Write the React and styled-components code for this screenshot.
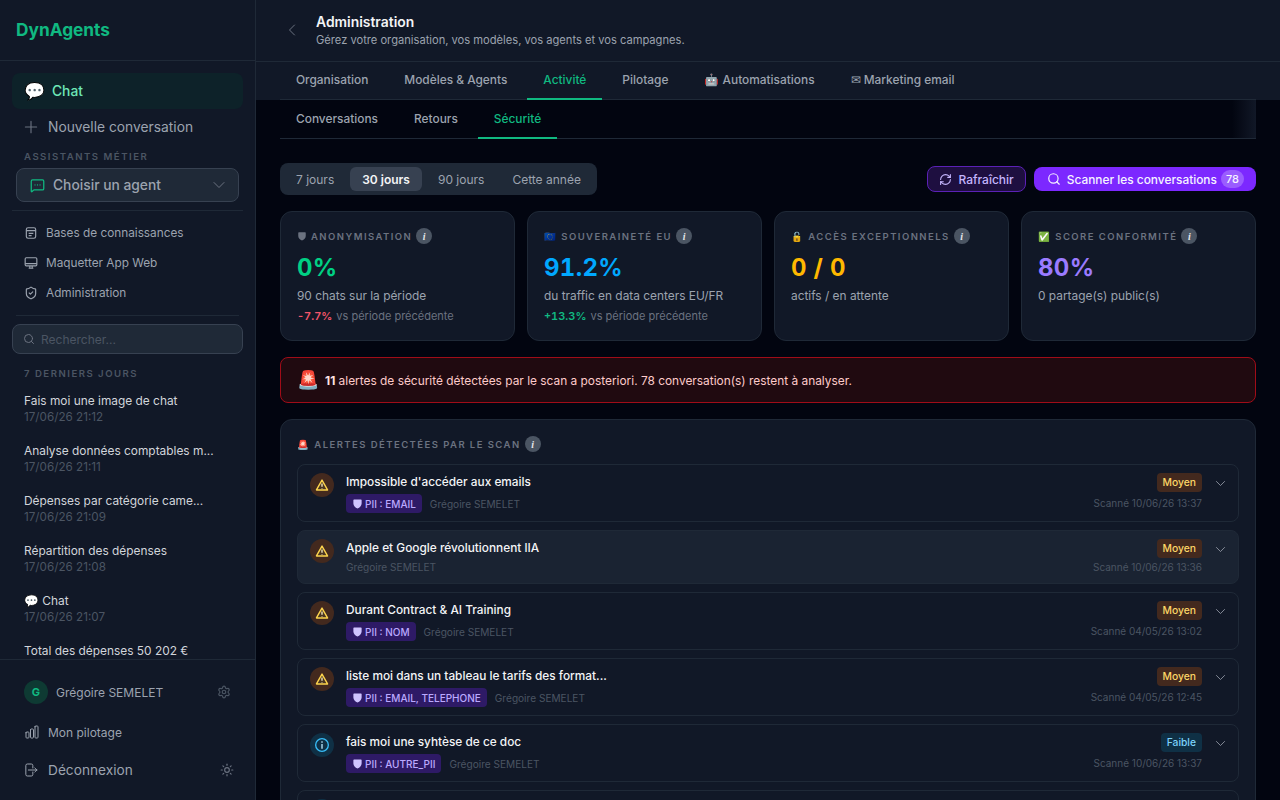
import React from 'react';
import styled, { createGlobalStyle } from 'styled-components';
import { MessageSquareMore, Search, Settings, ShieldCheck, Sun, RefreshCw } from 'lucide-react';

const Global = createGlobalStyle`
  html, body { margin: 0; height: 100%; background: #020510; overflow: hidden; }
  #root { height: 800px; }
  * { box-sizing: border-box; }
  body { font-family: Inter, "Noto Sans", sans-serif; }
`;
const Shell = styled.div`display: flex; width: 1280px; height: 800px; overflow: hidden;`;
const Sidebar = styled.aside`width: 256px; flex: none; height: 800px; background: #111827; border-right: 1px solid #1f2937; display: flex; flex-direction: column;`;
const Logo = styled.div`height: 61px; flex: none; padding: 0 16px 2px; display: flex; align-items: center; border-bottom: 1px solid #1f2937; color: #10b981; font-size: 17.3px; font-weight: 700;`;
const Nav = styled.nav`padding: 12px 12px 0; display: flex; flex-direction: column; flex: none;`;
const ChatItem = styled.div`height: 36px; border-radius: 8px; background: #0d2229; display: flex; align-items: center; padding-left: 12px; gap: 9px; color: #6ee7b7; font-size: 13.8px; font-weight: 500;`;
const ChatEmoji = styled.span`font-size: 17px; width: 19px; line-height: 1;`;
const NewChat = styled.div`height: 36px; display: flex; align-items: center; padding-left: 10px; gap: 8px; color: #9ca3af; font-size: 13.8px;`;
const Label = styled.div`padding-left: 12px; font-size: 9.6px; font-weight: 600; letter-spacing: 1.5px; text-transform: uppercase; color: #4b5563; line-height: 12px;`;
const AgentLabel = styled(Label)`margin-top: 6px;`;
const AgentSelect = styled.div`height: 34px; margin: 5px 4px 8px; border: 1px solid #374151; border-radius: 8px; background: #1f2937; display: flex; align-items: center; padding: 0 11px 0 13px; color: #9ca3af; font-size: 13.8px; font-weight: 500; justify-content: space-between;`;
const AgentLeft = styled.div`display: flex; align-items: center; gap: 8px;`;
const Rule = styled.div`height: 1px; background: #1f2937; margin: ${p => p.$inset ? '0 4px' : '0'};`;
const ToolList = styled.div`padding: 7px 0; display: flex; flex-direction: column;`;
const Tool = styled.div`height: 30px; display: flex; align-items: center; gap: 8px; padding-left: 12px; color: #9ca3af; font-size: 11.8px;`;
const SearchBox = styled.div`height: 30px; margin: 8px 12px 0; flex: none; border: 1px solid #374151; border-radius: 8px; background: #1f2937; display: flex; align-items: center; gap: 6px; padding-left: 10px; color: #4b5563; font-size: 12px;`;
const History = styled.div`flex: 1; min-height: 0; overflow: hidden; padding: 14px 12px 0;`;
const Conv = styled.div`height: 50px; padding: 7px 12px 0;`;
const ConvTitle = styled.div`font-size: 11.9px; line-height: 16px; color: #d1d5db; white-space: nowrap;`;
const ConvDate = styled.div`font-size: 11.7px; line-height: 16px; color: #4b5563;`;
const HistoryLabel = styled(Label)`margin-bottom: 6px;`;
const Footer = styled.div`height: 141px; flex: none; border-top: 1px solid #1f2937; padding: 20px 12px 0; display: flex; flex-direction: column;`;
const UserRow = styled.div`display: flex; align-items: center; height: 24px; padding: 0 12px; gap: 8px; color: #9ca3af; font-size: 12px;`;
const Avatar = styled.div`width: 24px; height: 24px; border-radius: 50%; background: #0e3a33; color: #10b981; font-size: 11px; font-weight: 700; display: flex; align-items: center; justify-content: center;`;
const Spacer = styled.div`flex: 1;`;
const FootLink = styled.div`height: 36px; margin-top: ${p => p.$mt || 0}px; display: flex; align-items: center; gap: 8px; padding: 0 9px 0 12px; color: #9ca3af; font-size: ${p => p.$size || 12}px;`;

const Main = styled.main`flex: 1; min-width: 0; height: 800px; overflow: hidden; display: flex; flex-direction: column;`;
const Header = styled.header`height: 62px; flex: none; background: #111827; border-bottom: 1px solid #1f2937; display: flex; align-items: center; padding: 0 0 2px 28px; gap: 16px;`;
const HeaderText = styled.div`display: flex; flex-direction: column;`;
const Title = styled.div`font-size: 13.9px; font-weight: 600; color: #f3f4f6; line-height: 20px;`;
const Subtitle = styled.div`font-size: 11.15px; color: #9ca3af; line-height: 16px;`;
const TabBand = styled.div`height: 38px; flex: none; background: #111827; padding: 0 24px;`;
const Tabs = styled.div`display: flex; gap: 4px; height: 100%; border-bottom: 1px solid #1f2937; position: relative;`;
const Tab = styled.div`height: ${p => p.$h || 38}px; padding: 0 16px ${p => p.$pb ?? 1}px; display: flex; align-items: center; font-size: 11.9px; font-weight: 500; white-space: nowrap; color: ${p => p.$on ? '#10b981' : '#9ca3af'}; border-bottom: 2px solid ${p => p.$on ? '#10b981' : 'transparent'};`;
const Content = styled.div`flex: 1; min-height: 0; overflow: hidden; padding: 0 24px;`;
const SubTabs = styled.div`display: flex; gap: 4px; height: 39px; border-bottom: 1px solid #1f2937; position: relative;`;
const Fade = styled.div`position: absolute; right: 0; top: 0; bottom: 0; width: 24px; background: linear-gradient(to right, transparent, #111827);`;
const Toolbar = styled.div`display: flex; justify-content: space-between; align-items: center; margin-top: 24px; height: 32px;`;
const Range = styled.div`display: flex; height: 32px; padding: 4px; background: #1f2937; border-radius: 8px; gap: 4px;`;
const RangeBtn = styled.div`height: 24px; padding: 0 12px; border-radius: 6px; display: flex; align-items: center; font-size: 12px; font-weight: ${p => p.$on ? 600 : 400}; color: ${p => p.$on ? '#f3f4f6' : '#9ca3af'}; background: ${p => p.$on ? '#374151' : 'transparent'};`;
const Actions = styled.div`display: flex; align-items: center; gap: 8px;`;
const Refresh = styled.div`height: 26px; padding: 0 11px; border: 1px solid #5b21b6; background: #1e0f40; border-radius: 8px; display: flex; align-items: center; gap: 6px; color: #c4b5fd; font-size: 12px; font-weight: 500;`;
const Scan = styled.div`height: 24px; padding: 0 12px 0 13px; background: #7c28ff; border-radius: 8px; display: flex; align-items: center; gap: 6px; color: #f5f3ff; font-size: 11.9px; font-weight: 500;`;
const Count = styled.span`height: 18px; margin-left: -2px; padding: 0 5px; border-radius: 9px; background: #9a5cff; font-size: 11px; display: flex; align-items: center;`;
const Cards = styled.div`display: grid; grid-template-columns: repeat(4, 1fr); gap: 12px; margin-top: 16px;`;
const Card = styled.div`height: 130px; background: #111827; border: 1px solid #1f2937; border-radius: 12px; padding: 16px;`;
const CardLabel = styled.div`display: flex; align-items: center; gap: 4px; height: 16px; font-size: 9.5px; font-weight: 600; letter-spacing: 1.45px; color: #6b7280; text-transform: uppercase; white-space: nowrap;`;
const InfoDot = styled.span`width: 16px; height: 16px; border-radius: 50%; background: #4b5563; color: #e5e7eb; font: italic 700 10px "Liberation Serif", serif; letter-spacing: 0; text-transform: none; display: inline-flex; align-items: center; justify-content: center;`;
const Value = styled.div`font-size: 24px; font-weight: 700; font-variant-numeric: tabular-nums; letter-spacing: .3px; line-height: 32px; margin-top: 8px; color: ${p => p.$c};`;
const Sub = styled.div`font-size: 11.9px; line-height: 16px; color: #9ca3af; margin-top: 4px;`;
const Delta = styled.div`font-size: 11px; line-height: 16px; color: #6b7280; margin-top: 4px; display: flex; gap: 4px;`;
const DeltaNum = styled.span`font-weight: 600; font-variant-numeric: tabular-nums; color: ${p => p.$c};`;
const Banner = styled.div`height: 46px; margin-top: 16px; border: 1px solid #a00c18; border-radius: 8px; background: #200a10; display: flex; align-items: center; padding-left: 16px; gap: 8px; color: #fecaca; font-size: 11.9px;`;
const BannerEmoji = styled.span`font-size: 18px; width: 20px; line-height: 1;`;
const Strong = styled.strong`font-weight: 700; color: #fee2e2;`;
const Panel = styled.section`margin-top: 16px; background: #111827; border: 1px solid #1f2937; border-radius: 12px; padding: 16px;`;
const PanelHead = styled(CardLabel)`margin-bottom: 12px;`;
const Rows = styled.div`display: flex; flex-direction: column; gap: 8px;`;
const Row = styled.div`border: 1px solid #1f2937; border-radius: 8px; background: ${p => p.$hover ? '#1a2332' : 'transparent'}; display: flex; padding: 8px 12px; gap: 12px;`;
const Bubble = styled.div`width: 24px; height: 24px; border-radius: 50%; flex: none; background: ${p => p.$info ? '#0f3045' : '#43291e'}; display: flex; align-items: center; justify-content: center;`;
const RowBody = styled.div`flex: 1; min-width: 0;`;
const RowTitle = styled.div`font-size: 11.85px; font-weight: 500; line-height: 18px; color: #f3f4f6;`;
const RowMeta = styled.div`display: flex; align-items: center; gap: 8px; margin-top: ${p => p.$tight ? 2 : 3}px; font-size: 10.1px; line-height: 16px; color: #4b5563;`;
const Pii = styled.span`height: 19px; padding: 0 6px; border-radius: 4px; background: #2e1a66; color: #bba9ff; font-size: 10px; font-weight: 500; display: inline-flex; align-items: center; gap: 2px;`;
const RowSide = styled.div`display: flex; flex-direction: column; align-items: flex-end; gap: ${p => p.$tight ? 1 : 3}px;`;
const Sev = styled.span`height: 19px; padding: 0 6px 1px; border-radius: 4px; font-size: 10.3px; font-weight: 500; display: inline-flex; align-items: center; background: ${p => p.$info ? '#0f3045' : '#43291e'}; color: ${p => p.$info ? '#7dd3fc' : '#fcd667'};`;
const Scanned = styled.div`font-size: 10px; line-height: 16px; color: #4b5563;`;
const Caret = styled.div`width: 12px; padding-top: 4px; color: #9ca3af; flex: none;`;

const Hero = ({ d, size = 16, sw = 1.5, color = 'currentColor' }) => (
  <svg width={size} height={size} viewBox="0 0 24 24" fill="none" stroke={color} strokeWidth={sw} strokeLinecap="round" strokeLinejoin="round" style={{ flex: 'none', display: 'block' }}><path d={d} /></svg>
);
const CHEV_DOWN = 'm19.5 8.25-7.5 7.5-7.5-7.5';
const CHEV_LEFT = 'M15.75 19.5 8.25 12l7.5-7.5';
const PLUS = 'M12 4.5v15m7.5-7.5h-15';
const CHART = 'M3 13.125C3 12.504 3.504 12 4.125 12h2.25c.621 0 1.125.504 1.125 1.125v6.75C7.5 20.496 6.996 21 6.375 21h-2.25A1.125 1.125 0 0 1 3 19.875v-6.75ZM9.75 8.625c0-.621.504-1.125 1.125-1.125h2.25c.621 0 1.125.504 1.125 1.125v11.25c0 .621-.504 1.125-1.125 1.125h-2.25a1.125 1.125 0 0 1-1.125-1.125V8.625ZM16.5 4.125c0-.621.504-1.125 1.125-1.125h2.25C20.496 3 21 3.504 21 4.125v15.75c0 .621-.504 1.125-1.125 1.125h-2.25a1.125 1.125 0 0 1-1.125-1.125V4.125Z';
const LOGOUT = 'M13.25 9V5.25A2.25 2.25 0 0 0 11 3H5a2.25 2.25 0 0 0-2.25 2.25v13.5A2.25 2.25 0 0 0 5 21h6a2.25 2.25 0 0 0 2.25-2.25V15m3 0 3-3m0 0-3-3m3 3H6.5';
const SHIELD = 'M4.500 3h15A1.500 1.500 0 0 1 21 4.500V12c0 5-4 9-9 11-5-2-9-6-9-11V4.500A1.500 1.500 0 0 1 4.500 3z';

const Shield = () => <svg width="11" height="11" viewBox="0 0 24 24" fill="#cfc3ff" style={{ flex: 'none' }}><path d={SHIELD} /></svg>;
const GreyShield = () => <svg width="10" height="10" viewBox="0 0 24 24" fill="#6b7280" style={{ flex: 'none' }}><path d={SHIELD} /></svg>;
const BookIcon = () => <svg width="14" height="14" viewBox="0 0 24 24" fill="none" stroke="#9ca3af" strokeWidth="2"><rect x="4" y="3" width="16" height="18" rx="3"/><path d="M4 8h16M8 12.500h8M8 16.500h5"/></svg>;
const DesktopIcon = () => <svg width="14" height="14" viewBox="0 0 24 24" fill="none" stroke="#9ca3af" strokeWidth="2"><rect x="2" y="3" width="20" height="14" rx="2"/><path d="M2 13h20M8 21h8M10 17v4M14 17v4"/></svg>;
const WarnIcon = () => <svg width="14" height="14" viewBox="0 0 24 24"><path d="M12 3.500 2.500 20.500h19z" fill="#4a3520" stroke="#fcd34d" strokeWidth="2.400" strokeLinejoin="round"/><path d="M12 9.500v5.500M12 17v1" stroke="#fef3c7" strokeWidth="2.200"/></svg>;
const InfoIcon = () => <svg width="16" height="16" viewBox="0 0 24 24" fill="none" stroke="#38bdf8" strokeWidth="2"><circle cx="12" cy="12" r="9.500"/><path d="M12 10.500v7M12 6.500v2" stroke="#bae6fd"/></svg>;

const convs = [
  ['Fais moi une image de chat', '17/06/26 21:12'],
  ['Analyse données comptables m...', '17/06/26 21:11'],
  ['Dépenses par catégorie came...', '17/06/26 21:09'],
  ['Répartition des dépenses', '17/06/26 21:08'],
  ['💬 Chat', '17/06/26 21:07'],
  ['Total des dépenses 50 202 €', null],
];
const alerts = [
  { t: "Impossible d'accéder aux emails", p: 'PII : EMAIL', d: 'Scanné 10/06/26 13:37' },
  { t: 'Apple et Google révolutionnent lIA', d: 'Scanné 10/06/26 13:36', hover: true },
  { t: 'Durant Contract & AI Training', p: 'PII : NOM', d: 'Scanné 04/05/26 13:02' },
  { t: 'liste moi dans un tableau le tarifs des format...', p: 'PII : EMAIL, TELEPHONE', d: 'Scanné 04/05/26 12:45' },
  { t: 'fais moi une syhtèse de ce doc', p: 'PII : AUTRE_PII', d: 'Scanné 10/06/26 13:37', info: true },
];

export default function App() {
  return (
    <Shell>
      <Global />
      <Sidebar>
        <Logo>DynAgents</Logo>
        <Nav>
          <ChatItem><ChatEmoji>💬</ChatEmoji>Chat</ChatItem>
          <NewChat><Hero d={PLUS} size={18} color="#6b7280" />Nouvelle conversation</NewChat>
          <AgentLabel>Assistants métier</AgentLabel>
          <AgentSelect>
            <AgentLeft><MessageSquareMore size={15} color="#10b981" />Choisir un agent</AgentLeft>
            <Hero d={CHEV_DOWN} color="#6b7280" />
          </AgentSelect>
          <Rule />
          <ToolList>
            <Tool><BookIcon />Bases de connaissances</Tool>
            <Tool><DesktopIcon />Maquetter App Web</Tool>
            <Tool><ShieldCheck size={14} />Administration</Tool>
          </ToolList>
          <Rule $inset />
        </Nav>
        <SearchBox><Search size={12} color="#6b7280" />Rechercher...</SearchBox>
        <History>
          <HistoryLabel>7 derniers jours</HistoryLabel>
          {convs.map(([t, d]) => <Conv key={t}><ConvTitle>{t}</ConvTitle>{d && <ConvDate>{d}</ConvDate>}</Conv>)}
        </History>
        <Footer>
          <UserRow><Avatar>G</Avatar>Grégoire SEMELET<Spacer /><Settings size={14} color="#4b5563" /></UserRow>
          <FootLink $mt={10}><Hero d={CHART} />Mon pilotage</FootLink>
          <FootLink $mt={2} $size={13.7}><Hero d={LOGOUT} />Déconnexion<Spacer /><Sun size={14} color="#6b7280" /></FootLink>
        </Footer>
      </Sidebar>
      <Main>
        <Header>
          <Hero d={CHEV_LEFT} color="#6b7280" />
          <HeaderText>
            <Title>Administration</Title>
            <Subtitle>Gérez votre organisation, vos modèles, vos agents et vos campagnes.</Subtitle>
          </HeaderText>
        </Header>
        <TabBand>
          <Tabs>
            <Tab>Organisation</Tab>
            <Tab>Modèles &amp; Agents</Tab>
            <Tab $on>Activité</Tab>
            <Tab>Pilotage</Tab>
            <Tab>🤖 Automatisations</Tab>
            <Tab>✉ Marketing email</Tab>
          </Tabs>
        </TabBand>
        <Content>
          <SubTabs>
            <Tab $h={39} $pb={0}>Conversations</Tab>
            <Tab $h={39} $pb={0}>Retours</Tab>
            <Tab $h={39} $pb={0} $on>Sécurité</Tab>
            <Fade />
          </SubTabs>
          <Toolbar>
            <Range>
              <RangeBtn>7 jours</RangeBtn>
              <RangeBtn $on>30 jours</RangeBtn>
              <RangeBtn>90 jours</RangeBtn>
              <RangeBtn>Cette année</RangeBtn>
            </Range>
            <Actions>
              <Refresh><RefreshCw size={13} />Rafraîchir</Refresh>
              <Scan><Search size={14} />Scanner les conversations<Count>78</Count></Scan>
            </Actions>
          </Toolbar>
          <Cards>
            <Card>
              <CardLabel><GreyShield />Anonymisation <InfoDot>i</InfoDot></CardLabel>
              <Value $c="#00d084">0%</Value>
              <Sub>90 chats sur la période</Sub>
              <Delta><DeltaNum $c="#f4566a">-7.7%</DeltaNum> vs période précédente</Delta>
            </Card>
            <Card>
              <CardLabel>🇪🇺 Souveraineté EU <InfoDot>i</InfoDot></CardLabel>
              <Value $c="#00a8ff">91.2%</Value>
              <Sub>du traffic en data centers EU/FR</Sub>
              <Delta><DeltaNum $c="#10b981">+13.3%</DeltaNum> vs période précédente</Delta>
            </Card>
            <Card>
              <CardLabel>🔓 Accès exceptionnels <InfoDot>i</InfoDot></CardLabel>
              <Value $c="#ffb800">0 / 0</Value>
              <Sub>actifs / en attente</Sub>
            </Card>
            <Card>
              <CardLabel>✅ Score conformité <InfoDot>i</InfoDot></CardLabel>
              <Value $c="#9b7bff">80%</Value>
              <Sub>0 partage(s) public(s)</Sub>
            </Card>
          </Cards>
          <Banner>
            <BannerEmoji>🚨</BannerEmoji>
            <span><Strong>11</Strong> alertes de sécurité détectées par le scan a posteriori. 78 conversation(s) restent à analyser.</span>
          </Banner>
          <Panel>
            <PanelHead>🚨 Alertes détectées par le scan <InfoDot>i</InfoDot></PanelHead>
            <Rows>
              {alerts.map(a => (
                <Row key={a.t} $hover={a.hover}>
                  <Bubble $info={a.info}>{a.info ? <InfoIcon /> : <WarnIcon />}</Bubble>
                  <RowBody>
                    <RowTitle>{a.t}</RowTitle>
                    <RowMeta $tight={!a.p}>{a.p && <Pii><Shield />{a.p}</Pii>}Grégoire SEMELET</RowMeta>
                  </RowBody>
                  <RowSide $tight={!a.p}>
                    <Sev $info={a.info}>{a.info ? 'Faible' : 'Moyen'}</Sev>
                    <Scanned>{a.d}</Scanned>
                  </RowSide>
                  <Caret><Hero d={CHEV_DOWN} size={13} /></Caret>
                </Row>
              ))}
              <Row><Bubble $info><InfoIcon /></Bubble></Row>
            </Rows>
          </Panel>
        </Content>
      </Main>
    </Shell>
  );
}
